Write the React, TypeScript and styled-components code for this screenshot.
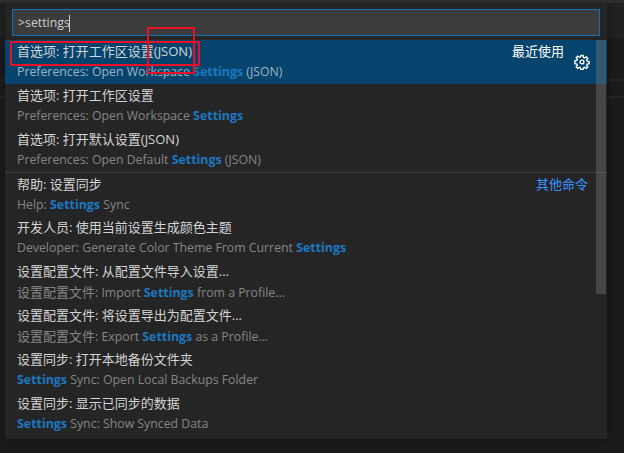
import React from 'react'
import styled, { createGlobalStyle } from 'styled-components'

const GlobalStyle = createGlobalStyle`
html, body {
    margin: 0;
    padding: 0;
    background: #1c1c1c;
}
`;

const Page = styled.div`
position: relative;
width: 624px;
height: 453px;
overflow: hidden;
background: linear-gradient(
    to bottom,
    #212121 0 35px,
    #1b1b1b 35px 76px,
    #252525 76px 78px,
    #1b1b1b 78px 93px,
    #252525 93px 95px,
    #1b1b1b 95px
);
border-top: 3px solid #2d2d2d;
box-sizing: border-box;
font-family: "Open Sans", "Noto Sans CJK SC", sans-serif;
`;

const Palette = styled.div`
width: 602px;
height: 436px;
margin-left: 5px;
background: #252526;
box-shadow: 0 0 8px rgba(0, 0, 0, 0.35);
`;

const InputWrap = styled.div`
padding: 6px 7px 4px;
`;

const Input = styled.div`
height: 25px;
border: 1px solid #0e70b5;
background: #3c3c3c;
color: #cccccc;
font-size: 12.3px;
line-height: 25px;
padding-left: 5px;
`;

const Caret = styled.span`
display: inline-block;
width: 1px;
height: 17px;
margin-left: -1px;
background: #cccccc;
vertical-align: middle;
`;

const List = styled.div`
position: relative;
`;

const Rows = styled.div`
display: flex;
flex-direction: column;
`;

const Row = styled.div<{ $active?: boolean; $separator?: boolean }>`
position: relative;
height: 44px;
box-sizing: border-box;
padding: ${(p) => (p.$separator ? "1px" : "0")} 19px 0 12px;
background: ${(p) => (p.$active ? "#06446e" : "transparent")};
color: #cccccc;
${(p) => p.$separator && `
&::before {
    content: "";
    position: absolute;
    top: 0;
    left: 0;
    right: 0;
    height: 1px;
    background: #3f3f40;
}
`}
`;

const LabelLine = styled.div`
display: flex;
justify-content: space-between;
align-items: center;
height: 21px;
`;

const DetailLine = styled.div`
display: flex;
align-items: center;
height: 18px;
margin-top: 1px;
`;

const Label = styled.span`
font-size: 13px;
color: #d4d4d4;
white-space: nowrap;
`;

const Note = styled.span`
font-size: 13px;
color: #ffffff;
margin-right: 24px;
`;

const LinkNote = styled.span`
font-size: 13px;
color: #3794ff;
`;

const Detail = styled.span<{ $active?: boolean }>`
font-size: 12.3px;
color: ${(p) => (p.$active ? "#9fb4c3" : "#858585")};
white-space: nowrap;
`;

const Cjk = styled.span`
font-size: 13px;
`;

const Match = styled.span`
color: #1c78c0;
font-weight: 700;
font-size: 12.4px;
`;

const GearSlot = styled.span`
position: absolute;
top: 14px;
right: 17px;
display: flex;
`;

const ScrollThumb = styled.div`
position: absolute;
top: 0;
right: 1px;
width: 10px;
height: 254px;
background: rgba(121, 121, 121, 0.4);
`;

const Annotation = styled.div`
position: absolute;
left: 10px;
top: 38px;
width: 186px;
height: 21px;
border: 2px solid #e81123;
`;

const AnnotationTall = styled.div`
position: absolute;
left: 147px;
top: 24px;
width: 44px;
height: 43px;
border: 2px solid #e81123;
`;

type Command = {
    label: string;
    detail: React.ReactNode;
    note?: string;
    link?: string;
    active?: boolean;
    separator?: boolean;
};

const commands: Command[] = [
    { label: "首选项: 打开工作区设置(JSON)", detail: <>Preferences: Open Workspace <Match>Settings</Match> (JSON)</>, note: "最近使用", active: true },
    { label: "首选项: 打开工作区设置", detail: <>Preferences: Open Workspace <Match>Settings</Match></> },
    { label: "首选项: 打开默认设置(JSON)", detail: <>Preferences: Open Default <Match>Settings</Match> (JSON)</> },
    { label: "帮助: 设置同步", detail: <>Help: <Match>Settings</Match> Sync</>, link: "其他命令", separator: true },
    { label: "开发人员: 使用当前设置生成颜色主题", detail: <>Developer: Generate Color Theme From Current <Match>Settings</Match></> },
    { label: "设置配置文件: 从配置文件导入设置...", detail: <><Cjk>设置配置文件</Cjk>: Import <Match>Settings</Match> from a Profile...</> },
    { label: "设置配置文件: 将设置导出为配置文件...", detail: <><Cjk>设置配置文件</Cjk>: Export <Match>Settings</Match> as a Profile...</> },
    { label: "设置同步: 打开本地备份文件夹", detail: <><Match>Settings</Match> Sync: Open Local Backups Folder</> },
    { label: "设置同步: 显示已同步的数据", detail: <><Match>Settings</Match> Sync: Show Synced Data</> },
];

function GearIcon() {
    return (
        <svg width="16" height="16" viewBox="0 0 16 16" fill="none" stroke="#ffffff" strokeWidth="1.4">
            <circle cx="8" cy="8" r="1.9" />
            <path d="M6.9 1.5h2.2l.4 1.9 1.2.5 1.6-1.1 1.5 1.5-1.1 1.6.5 1.2 1.9.4v2.2l-1.9.4-.5 1.2 1.1 1.6-1.5 1.5-1.6-1.1-1.2.5-.4 1.9H6.9l-.4-1.9-1.2-.5-1.6 1.1-1.5-1.5 1.1-1.6-.5-1.2-1.9-.4V6.9l1.9-.4.5-1.2-1.1-1.6 1.5-1.5 1.6 1.1 1.2-.5z" />
        </svg>
    );
}

function App() {
    return (
        <Page>
            <GlobalStyle />
            <Palette>
                <InputWrap>
                    <Input>&gt;settings<Caret /></Input>
                </InputWrap>
                <List>
                    <Rows>
                        {commands.map((c) => (
                            <Row key={c.label} $active={c.active} $separator={c.separator}>
                                <LabelLine>
                                    <Label>{c.label}</Label>
                                    {c.note && <Note>{c.note}</Note>}
                                    {c.link && <LinkNote>{c.link}</LinkNote>}
                                </LabelLine>
                                <DetailLine>
                                    <Detail $active={c.active}>{c.detail}</Detail>
                                </DetailLine>
                                {c.active && <GearSlot><GearIcon /></GearSlot>}
                            </Row>
                        ))}
                    </Rows>
                    <ScrollThumb />
                </List>
            </Palette>
            <Annotation />
            <AnnotationTall />
        </Page>
    )
}

export default App
